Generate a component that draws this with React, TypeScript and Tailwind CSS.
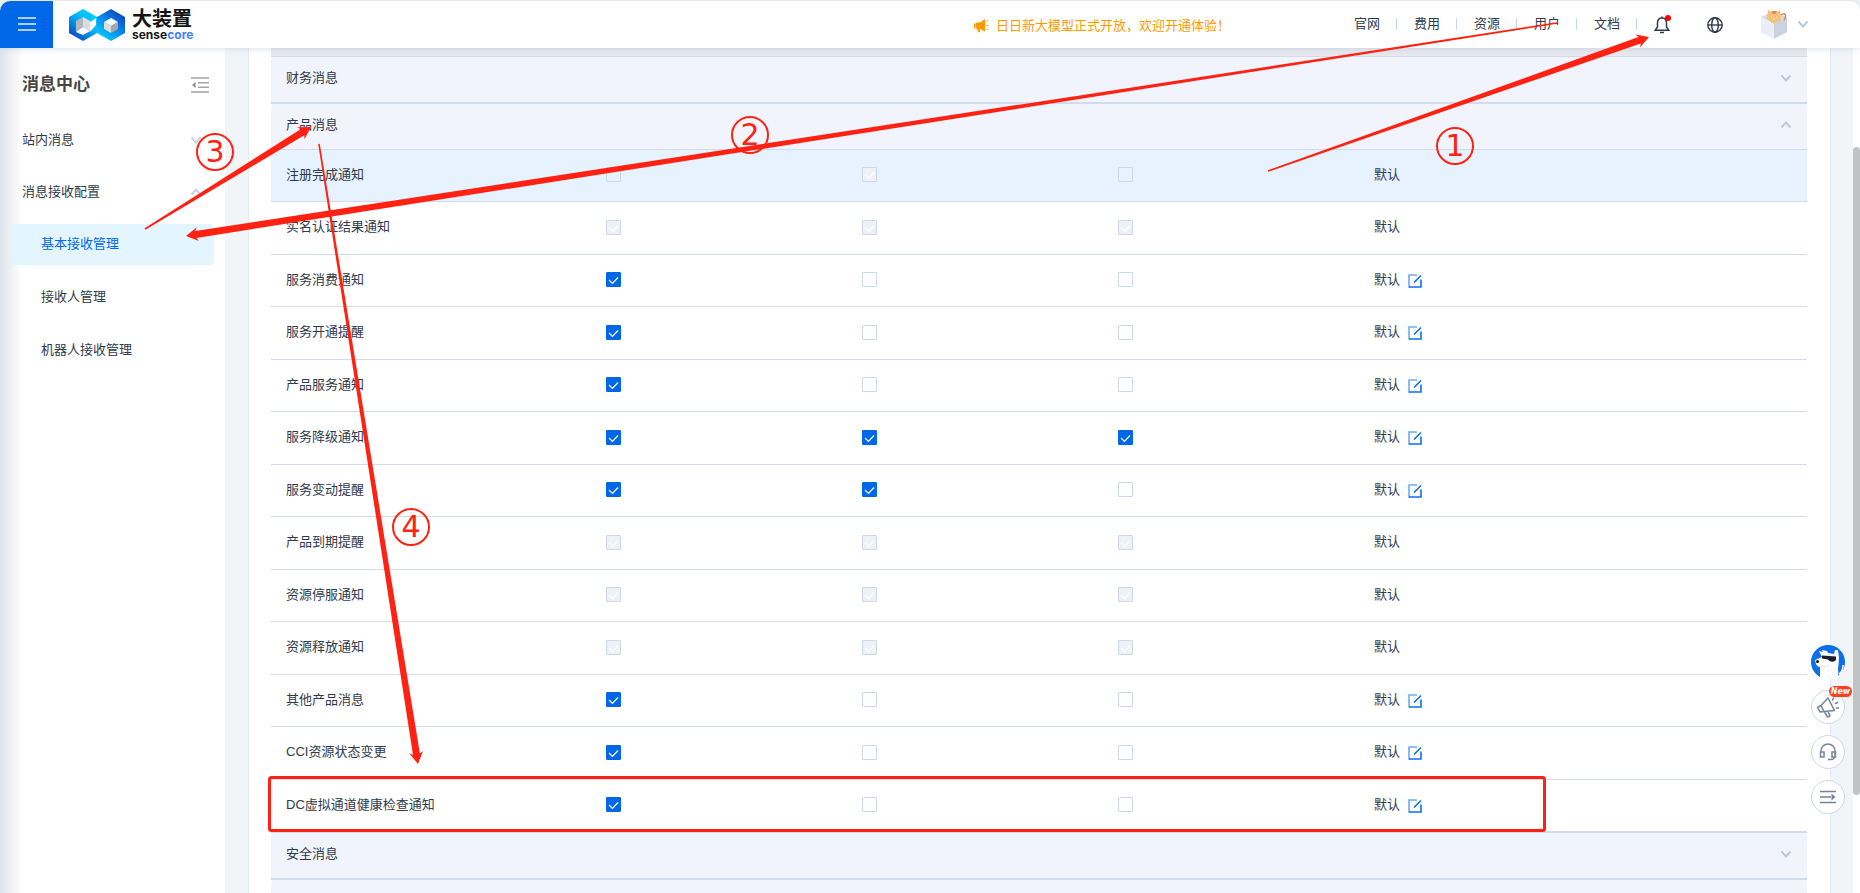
import {useState} from "react";
import {clsx} from "clsx";

type Row = {
    name: string
    // "1" checked, "0" empty, "x" locked and checked, "-" locked and empty
    state: string
}

const rows: Row[] = [
    {name: "注册完成通知", state: "-x-"},
    {name: "实名认证结果通知", state: "xxx"},
    {name: "服务消费通知", state: "100"},
    {name: "服务开通提醒", state: "100"},
    {name: "产品服务通知", state: "100"},
    {name: "服务降级通知", state: "111"},
    {name: "服务变动提醒", state: "110"},
    {name: "产品到期提醒", state: "xxx"},
    {name: "资源停服通知", state: "xxx"},
    {name: "资源释放通知", state: "xxx"},
    {name: "其他产品消息", state: "100"},
    {name: "CCI资源状态变更", state: "100"},
    {name: "DC虚拟通道健康检查通知", state: "100"},
]

const channels = ["站内信", "邮件", "短信"]
const navLinks = ["官网", "费用", "资源", "用户", "文档"]

function Chevron({up, className}: {up?: boolean, className?: string}) {
    return (
        <svg viewBox="0 0 12 12" className={clsx("w-3 h-3 shrink-0", className)} fill="none" stroke="currentColor" strokeWidth="1.9">
            <path d={up ? "M1.5 8.5 6 3.5l4.5 5" : "M1.5 3.5 6 8.5l4.5-5"} />
        </svg>
    )
}

function Logo() {
    return (
        <svg viewBox="0 0 56 32" className="w-14 h-8" aria-hidden="true">
            <defs>
                <linearGradient id="hexLeft" x1="0.9" y1="0" x2="0.2" y2="1">
                    <stop offset="0" stopColor="#00d8ff" />
                    <stop offset="0.45" stopColor="#05b4fa" />
                    <stop offset="1" stopColor="#0a3fb8" />
                </linearGradient>
                <linearGradient id="hexRight" x1="0.8" y1="0" x2="0.1" y2="1">
                    <stop offset="0" stopColor="#0a3cb5" />
                    <stop offset="0.5" stopColor="#0a8df0" />
                    <stop offset="1" stopColor="#00d8ff" />
                </linearGradient>
            </defs>
            <path d="M14 0 28 8v16l-14 8L0 24V8z" fill="url(#hexLeft)" />
            <path d="M42 0 56 8v16l-14 8-14-8V8z" fill="url(#hexRight)" />
            <path d="M21 13l6-4v7l-6 7z" fill="#fff" />
            <path d="M7 12l7-4v10l-7 5z" fill="#b3b6ba" />
            <path d="M14 8l7 4v10l-7-4z" fill="#dcdddf" />
            <path d="M7 23l7-5 7 4-7 4z" fill="#fff" />
            <path d="M35 13l7-4 7 4-7 4z" fill="#fff" />
            <path d="M35 13l7 4v7l-7-4z" fill="#dcdddf" />
            <path d="M42 17l7-4v7l-7 4z" fill="#a4a8ae" />
        </svg>
    )
}

function Header() {
    return (
        <header className="relative z-10 flex h-12 shrink-0 items-center rounded-t-[10px] border-t border-[#e9e9e9] bg-white shadow-[0_1px_6px_rgba(150,170,205,0.35)]">
            <button aria-label="菜单" className="flex h-full w-[53px] items-center justify-center rounded-tl-[10px] bg-[#0068e8]">
                <svg viewBox="0 0 18 14" className="mb-[2px] h-[14px] w-[18px]" stroke="#e6f0fd" strokeWidth="1.6">
                    <path d="M0 1h18M0 7h18M0 13h18" />
                </svg>
            </button>
            <a href="#" className="ml-4 flex items-center gap-[7px]">
                <Logo />
                <span className="flex flex-col">
                    <span className="text-xl leading-5 font-bold text-[#141414]">大装置</span>
                    <span className="font-[Inter] text-xs leading-3 font-bold text-[#161616]">sense<span className="text-[#3f80ff]">core</span></span>
                </span>
            </a>
            <a href="#" className="ml-auto flex items-center gap-[7px] pt-[2px] text-[#ff9a00]">
                <svg viewBox="0 0 15 14" className="h-[14px] w-[15px]" fill="currentColor">
                    <path d="M0 4.500h1.500v5H0zM2 4l5-1 3-2.600c.7-.5 1.200-.2 1.200.5v10.800c0 .7-.6 1-1.200.5L8 10.700 5.500 10l.8 3.200H4L3 9.700 2 9.500zM12.300 2l1.500-1 .5.700-1.500 1zM12.600 6.100h2v1h-2zM12.300 10.500l.5-.7 1.500 1-.5.800z" />
                </svg>
                日日新大模型正式开放，欢迎开通体验！
            </a>
            <nav className="ml-[124px] flex items-center pb-[2px]">
                {navLinks.map((item) => (
                    <a key={item} href="#" className="flex w-[60px] items-center justify-between text-[#2f3b4b]">
                        {item}
                        <span className="mr-[17px] h-3 w-px bg-[#c9d5ea]" />
                    </a>
                ))}
            </nav>
            <button aria-label="通知" className="relative">
                <svg viewBox="0 0 16 18" className="h-[18px] w-4" fill="none" stroke="#2f3b4b" strokeWidth="1.5">
                    <path d="M8 2C5 2 3.500 4.200 3.500 7v4L1.300 14.200h13.400L12.500 11V7C12.500 4.200 11 2 8 2zM8 2V.5M6 16.500h4" />
                </svg>
                <span className="absolute -top-px -right-px h-[6px] w-[6px] rounded-full bg-[#ff0000]" />
            </button>
            <button aria-label="语言" className="ml-[37px]">
                <svg viewBox="0 0 16 16" className="h-4 w-4" fill="none" stroke="#2f3b4b" strokeWidth="1.4">
                    <circle cx="8" cy="8" r="7.200" />
                    <ellipse cx="8" cy="8" rx="3.300" ry="7.200" />
                    <path d="M1 8h14" />
                </svg>
            </button>
            <button aria-label="账户" className="mr-[51px] ml-[37px] flex items-center gap-[9px] pb-[2px]">
                <svg viewBox="0 0 28 30" className="h-[30px] w-7">
                    <path d="M1 8l13-6 13 6-13 7z" fill="#d5dbe6" />
                    <path d="M1 8l13 7v15L1 23z" fill="#e9eff8" />
                    <path d="M27 8l-13 7v15l13-7z" fill="#ccd3e0" />
                    <path d="M8 1l3 2h6l3-2 1 10-7 4-7-5z" fill="#f9bf72" />
                    <path d="M11 2h6l-2 3h-2z" fill="#d78a55" />
                    <path d="M21 6c4-3 6 0 3 5" fill="none" stroke="#d28a60" strokeWidth="1.500" />
                    <path d="M11 8h1M16 8h1M13 10h2" stroke="#fff" />
                </svg>
                <Chevron className="text-[#b9c6da]" />
            </button>
        </header>
    )
}

function Sidebar() {
    const subItems = ["基本接收管理", "接收人管理", "机器人接收管理"]

    return (
        <aside className="w-[225px] shrink-0 bg-white bg-linear-to-r from-[#dfe3ea] via-white via-10% to-white">
            <div className="flex items-center justify-between pt-[25px] pr-4 pl-[22px]">
                <h1 className="text-[17px] leading-6 font-bold text-[#454545]">消息中心</h1>
                <button aria-label="收起">
                    <svg viewBox="0 0 18 16" className="h-4 w-[18px]" stroke="#a3a3a3" strokeWidth="1.600">
                        <path d="M0 1h18M7 5.700h11M7 10.300h11M0 15h18" />
                        <path d="M4.500 5v6L1 8z" fill="#8d8d8d" stroke="none" />
                    </svg>
                </button>
            </div>
            <nav className="mt-[19px] flex flex-col gap-3 text-[#2f3b4b]">
                <button className="flex h-10 items-center justify-between pt-2 pr-[23px] pl-[22px]">
                    站内消息 <Chevron className="text-[#c9d3e2]" />
                </button>
                <button className="flex h-10 items-center justify-between pt-2 pr-[23px] pl-[22px]">
                    消息接收配置 <Chevron up className="text-[#c9d3e2]" />
                </button>
                {subItems.map((item, i) => (
                    <a
                        key={item}
                        href="#"
                        className={clsx("mr-[11px] ml-[11px] flex h-[41px] items-center rounded-[4px] pb-px pl-[30px]", i === 0 && "mt-1 bg-[#e3f5ff] text-[#0068e8]")}
                    >
                        {item}
                    </a>
                ))}
            </nav>
        </aside>
    )
}

function GroupHeader({title, open}: {title: string, open?: boolean}) {
    return (
        <button className={clsx("flex w-full items-center justify-between rounded-t-[4px] border-[#d0dbeb] bg-[#f1f4fd] pr-[15px] pb-[3px] pl-[15px]", open ? "h-[46px] border-b" : "h-[47px] border-b-2")}>
            {title}
            <Chevron up={open} className="text-[#bcc8d8]" />
        </button>
    )
}

function Check({label, initial}: {label: string, initial: string}) {
    const locked = initial === "x" || initial === "-"
    const [checked, setChecked] = useState(initial === "1" || initial === "x")

    return (
        <label className="grid w-[15px]">
            <input
                type="checkbox"
                aria-label={label}
                checked={checked}
                disabled={locked}
                onChange={() => setChecked(!checked)}
                className="col-start-1 row-start-1 h-[15px] w-[15px] appearance-none rounded-[1px] border border-[#ccd9ec] enabled:bg-white enabled:checked:border-[#0068e8] enabled:checked:bg-[#0068e8] disabled:checked:bg-[#eef1f6]"
            />
            {checked && (
                <svg viewBox="0 0 15 15" className="pointer-events-none col-start-1 row-start-1 h-[15px] w-[15px]" fill="none" stroke="#fff" strokeWidth="1.200">
                    <path d="M3 8l3.500 3.500L12 5.500" />
                </svg>
            )}
        </label>
    )
}

function EditIcon() {
    return (
        <svg viewBox="0 0 14 14" className="h-[14px] w-[14px]" fill="none" strokeWidth="1.600">
            <path d="M9 1H1v12h1" stroke="#6fabf5" />
            <path d="M1 13h12V5.500M6 8.500l7-7" stroke="#0f70ea" />
        </svg>
    )
}

function MessageTable() {
    return (
        <table className="w-full table-fixed border-separate border-spacing-0">
            <colgroup>
                <col className="w-[320px]" />
                <col className="w-1/6" />
                <col className="w-1/6" />
                <col className="w-1/6" />
                <col />
            </colgroup>
            <tbody>
                {rows.map((row, i) => (
                    <tr key={row.name} className={clsx("odd:h-[52px] even:h-[53px]", i === 0 && "bg-[#e7f2ff]")}>
                        <td className="border-b border-[#d0dbeb] pb-[2px] pl-[15px]">{row.name}</td>
                        {channels.map((channel, c) => (
                            <td key={channel} className="border-b border-[#d0dbeb] pb-[2px] pl-[15px]">
                                <Check label={`${row.name} ${channel}`} initial={row.state[c]} />
                            </td>
                        ))}
                        <td className="border-b border-[#d0dbeb] pb-[2px] pl-[15px]">
                            <div className="flex items-center gap-2">
                                默认
                                {/[01]/.test(row.state) && (
                                    <button aria-label={`编辑 ${row.name}`} className="pt-[2px]"><EditIcon /></button>
                                )}
                            </div>
                        </td>
                    </tr>
                ))}
            </tbody>
        </table>
    )
}

function FloatingTools() {
    const round = "relative flex h-[34px] w-[34px] items-center justify-center rounded-full border border-[#cbd7ea] bg-white"

    return (
        <div className="absolute right-[15px] bottom-[79px] z-20 flex flex-col gap-[11px]">
            <button aria-label="助手" className="h-[34px] w-[34px]">
                <svg viewBox="0 0 34 34" className="h-[34px] w-[34px]">
                    <circle cx="17" cy="17" r="17" fill="#0a6fe8" />
                    <path d="M9 32V22c-2 0-4-2-4.500-4.500L4 15l7-3-3-6 4 1-1-2 5 1 1 2 6 1 1-4h3l1 8-1 12c1 3 0 6-1 7-5 3-12 4-18 0z" fill="#fff" />
                    <path d="M11 10.500l14 1v3c-1 3-6 3-8 0l-6-1z" fill="#1a1f2b" />
                    <circle cx="6.500" cy="16.500" r="1.600" fill="#1a1f2b" />
                    <path d="M10 21c3 1 6 1 8-1" stroke="#d5dbe6" fill="none" />
                    <path d="M28 29c3-2 4-5 4-9" stroke="#fff" strokeWidth="1.500" fill="none" />
                </svg>
            </button>
            <button aria-label="公告" className={round}>
                <svg viewBox="0 0 24 24" className="h-6 w-6" fill="none" stroke="#77839b" strokeWidth="1.500" strokeLinejoin="round" strokeLinecap="round">
                    <path d="M12 3l6.500 12.500L8 16.500 4 17 1.500 12.500 5 10.500zM5 10.500l3 6M8.500 17l3 5 2.500-1-2-4.500M16.500 5l1-2M19.500 8.500l2-1M20.500 13h2" />
                </svg>
                <span className="absolute -top-[5px] -right-[8px] flex h-[11px] w-[23px] items-center justify-center rounded-full bg-[#ff3d1f] font-[DejaVu_Sans] text-[8px] leading-none font-bold text-white italic">New</span>
            </button>
            <button aria-label="客服" className={round}>
                <svg viewBox="0 0 18 18" className="h-[18px] w-[18px]" fill="none" stroke="#77839b" strokeWidth="1.500">
                    <path d="M2 9V8a7 7 0 0 1 14 0v5c0 2-2 3.500-4 3.500H9M1.500 9H5v5H1.500zM16.500 9H13v5h3.500z" />
                </svg>
            </button>
            <button aria-label="收起工具" className={round}>
                <svg viewBox="0 0 16 14" className="h-[14px] w-4" fill="none" stroke="#77839b" strokeWidth="1.500">
                    <path d="M0 1.500h16M0 7h11M0 12.500h16" />
                    <path d="M11.500 3.500v7L15.500 7z" fill="#77839b" stroke="none" />
                </svg>
            </button>
        </div>
    )
}

// Arrow that starts as a thin line and widens towards its head
function arrowPoints(x1: number, y1: number, x2: number, y2: number) {
    const len = Math.hypot(x2 - x1, y2 - y1)
    const ux = (x2 - x1) / len
    const uy = (y2 - y1) / len
    const at = (along: number, side: number) => `${x1 + ux * along - uy * side},${y1 + uy * along + ux * side}`

    return [
        at(0, 0.8), at(len - 10, 3.5), at(len - 12, 7), at(len, 0),
        at(len - 12, -7), at(len - 10, -3.5), at(0, -0.8),
    ].join(" ")
}

function Annotations() {
    const arrows = [
        [1268, 171, 1649, 37],
        [1557, 23, 186, 236],
        [145, 229, 311, 127],
        [319, 144, 418, 764],
    ]
    const steps = [
        {n: 1, x: 1455, y: 146},
        {n: 2, x: 750, y: 135},
        {n: 3, x: 215, y: 152},
        {n: 4, x: 411, y: 527},
    ]

    return (
        <svg className="pointer-events-none absolute inset-0 z-30 h-full w-full" fill="#ff2212">
            {arrows.map(([x1, y1, x2, y2]) => (
                <polygon key={x1} points={arrowPoints(x1, y1, x2, y2)} />
            ))}
            {steps.map(({n, x, y}) => (
                <g key={n}>
                    <circle cx={x} cy={y} r="18" fill="none" stroke="#ff2212" strokeWidth="2" />
                    <text x={x} y={y + 10} textAnchor="middle" className="font-[DejaVu_Sans] text-[30px]">{n}</text>
                </g>
            ))}
            <rect x="269.500" y="777.500" width="1275" height="53" rx="2" fill="none" stroke="#ff2212" strokeWidth="3" />
        </svg>
    )
}

export default function App() {
    return (
        <div className="relative flex h-screen flex-col overflow-hidden bg-[#f1f5f8] font-['Liberation_Sans','Noto_Sans_CJK_SC',sans-serif] text-[13px] leading-5 text-[#2f3b4b]">
            <Header />
            <div className="flex min-h-0 flex-1">
                <Sidebar />
                <main className="ml-[23px] min-w-0 flex-1 overflow-hidden border-x border-[#e4e9f8] bg-white pr-[23px] pl-[22px]">
                    <div className="h-[9px] border-b border-[#d0dbeb] bg-[#e8e9ee]" />
                    <GroupHeader title="财务消息" />
                    <GroupHeader title="产品消息" open />
                    <MessageTable />
                    <div className="border-t border-[#d0dbeb]">
                        <GroupHeader title="安全消息" />
                        <div className="h-12 rounded-t-[4px] bg-[#f1f4fd]" />
                    </div>
                </main>
                <div className="ml-[22px] w-[7px] shrink-0 bg-white pt-[99px]">
                    <div className="h-[648px] rounded-full bg-[#c1c2c4]" />
                </div>
            </div>
            <FloatingTools />
            <Annotations />
        </div>
    )
}
